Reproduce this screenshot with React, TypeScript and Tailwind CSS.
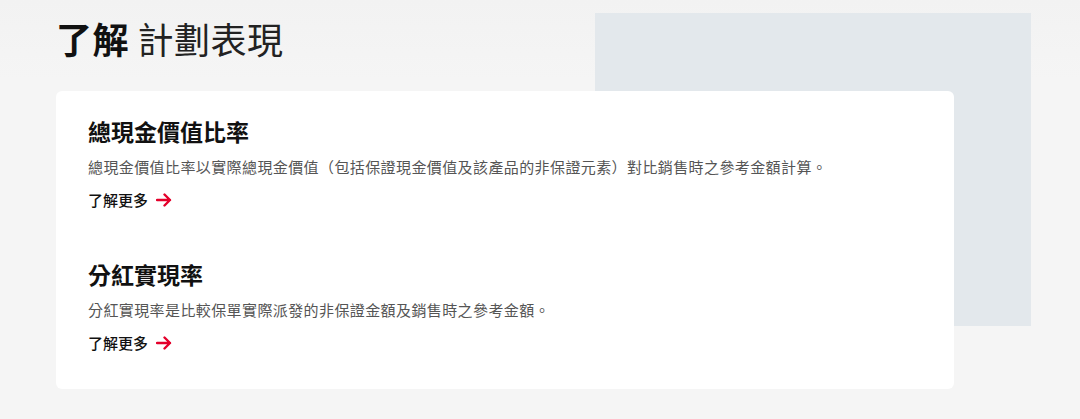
const items = [
  {
    title: "總現金價值比率",
    desc: "總現金價值比率以實際總現金價值（包括保證現金價值及該產品的非保證元素）對比銷售時之參考金額計算。",
  },
  {
    title: "分紅實現率",
    desc: "分紅實現率是比較保單實際派發的非保證金額及銷售時之參考金額。",
  },
];

function Arrow() {
  return (
    <svg width="16" height="14" viewBox="0 0 16 14" fill="none" className="text-[#e4002b]">
      <path d="M1 7h13M8.5 1.5 14 7l-5.5 5.5" stroke="currentColor" strokeWidth="2.4" strokeLinecap="round" strokeLinejoin="round" />
    </svg>
  );
}

export default function App() {
  return (
    <div
      className="relative h-[419px] w-[1080px] overflow-hidden bg-[#f5f5f5] bg-[linear-gradient(to_bottom,#f2f2f2,#f5f5f5_80px)] px-[56px] pt-[14px] text-[#111]"
      style={{ fontFamily: '"Noto Sans CJK TC", "Noto Sans", sans-serif' }}
    >
      {/* decorative backdrop */}
      <div className="pointer-events-none absolute left-[595px] top-[13px] h-[313px] w-[436px] bg-[#e3e8ec]" />

      <div className="relative">
        <h2 className="text-[36px] leading-[48px] tracking-[0.5px]">
          <span className="font-bold">了解</span> <span className="font-normal text-[#222]">計劃表現</span>
        </h2>

        <div className="mt-[29px] flex w-[898px] flex-col gap-[47px] rounded-[6px] bg-white px-[32px] pb-[35px] pt-[24px]">
          {items.map((it) => (
            <div key={it.title} className="flex flex-col">
              <h3 className="text-[23px] font-bold leading-[32px] text-[#111]">{it.title}</h3>
              <p className="mt-[9px] text-[15px] leading-[22px] tracking-[0.4px] text-[#555]">{it.desc}</p>
              <a href="#" className="mt-[11px] flex items-center gap-[8px] text-[15px] font-medium leading-[22px] text-[#111]">
                了解更多
                <Arrow />
              </a>
            </div>
          ))}
        </div>
      </div>
    </div>
  );
}
